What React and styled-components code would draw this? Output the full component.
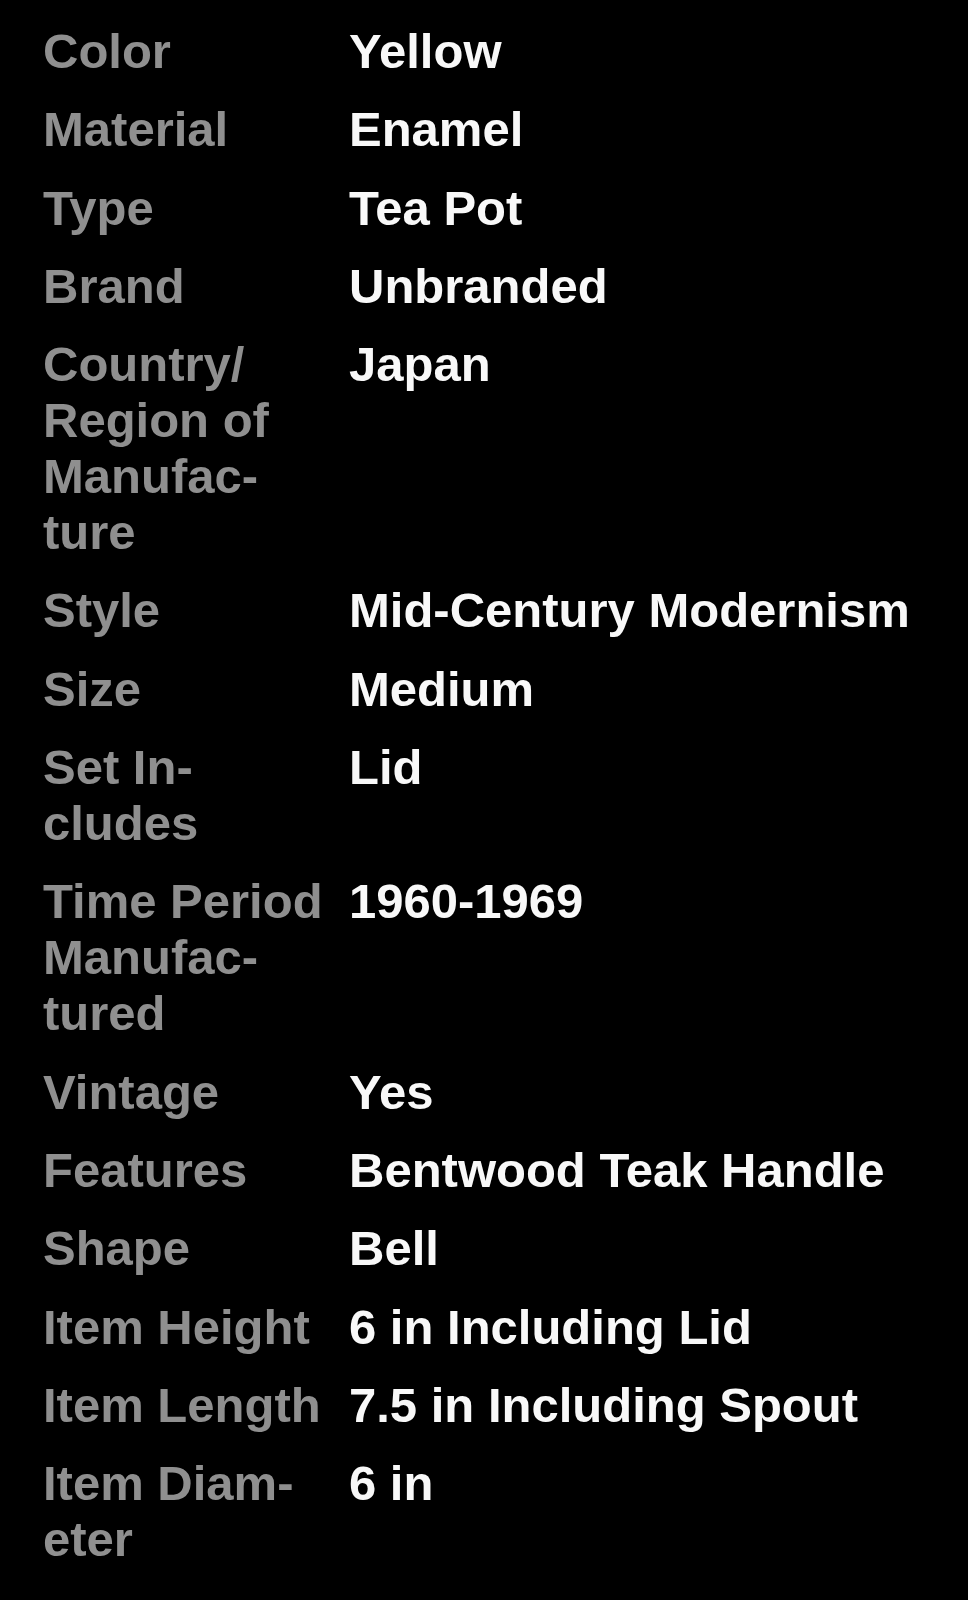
import React from "react";
import styled, { createGlobalStyle } from "styled-components";

const GlobalStyle = createGlobalStyle`
  html, body {
    margin: 0;
    padding: 0;
    background-color: #000;
  }

  #root {
    min-height: 1600px;
    background-color: #000;
  }
`;

const Page = styled.main`
  padding: 23px 20px 40px 43px;
  font-family: "Liberation Sans", Arial, Helvetica, sans-serif;
  font-weight: 700;
  font-size: 49px;
  line-height: 56px;
  -webkit-font-smoothing: antialiased;
`;

const Specs = styled.dl`
  margin: 0;
  display: grid;
  grid-template-columns: 284px 1fr;
  column-gap: 22px;
  row-gap: 22.3px;
`;

const Label = styled.dt`
  margin: 0;
  color: #8f8f8f;
  overflow-wrap: break-word;
`;

const Value = styled.dd`
  margin: 0;
  color: #f8f8f8;
`;

const specs = [
  ["Color", "Yellow"],
  ["Material", "Enamel"],
  ["Type", "Tea Pot"],
  ["Brand", "Unbranded"],
  [`Country/\u200BRegion of Manufac\u00ADture`, "Japan"],
  ["Style", "Mid-Century Modernism"],
  ["Size", "Medium"],
  [`Set In\u00ADcludes`, "Lid"],
  [`Time Period Manufac\u00ADtured`, "1960-1969"],
  ["Vintage", "Yes"],
  ["Features", "Bentwood Teak Handle"],
  ["Shape", "Bell"],
  ["Item Height", "6 in Including Lid"],
  ["Item Length", "7.5 in Including Spout"],
  [`Item Diam\u00ADeter`, "6 in"],
];

const App = () => {
  return (
    <>
      <GlobalStyle />
      <Page lang="en">
        <Specs>
          {specs.map(([label, value]) => (
            <React.Fragment key={label}>
              <Label>{label}</Label>
              <Value>{value}</Value>
            </React.Fragment>
          ))}
        </Specs>
      </Page>
    </>
  );
};

export default App;
